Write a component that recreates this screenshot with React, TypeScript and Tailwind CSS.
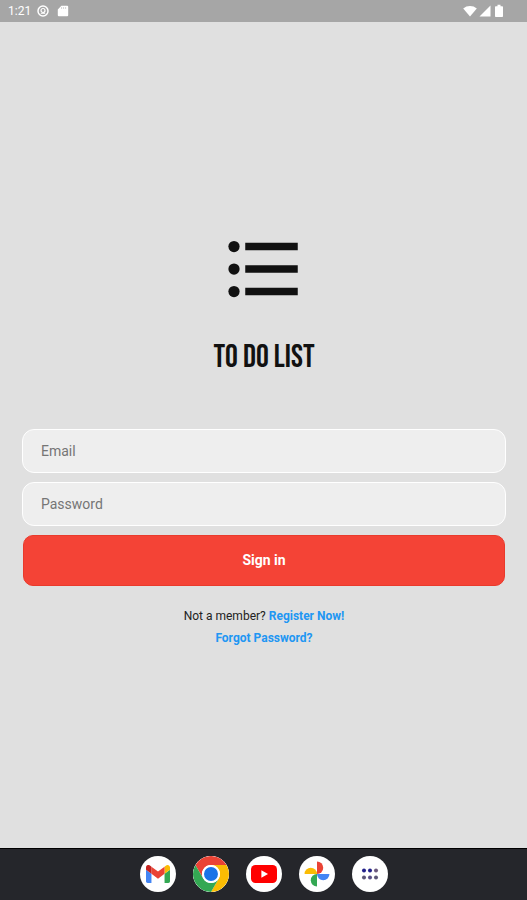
import { useState } from 'react'
import type { FormEvent, ReactNode } from 'react'

type DockApp = { name: string; icon: ReactNode }

const DOCK_APPS: DockApp[] = [
  {
    name: 'Gmail',
    icon: (
      <svg viewBox="52 42 88 66" className="h-[18px] w-6">
        <path fill="#4285f4" d="M58 108h14V74L52 59v43c0 3.32 2.69 6 6 6" />
        <path fill="#34a853" d="M120 108h14c3.32 0 6-2.69 6-6V59l-20 15" />
        <path fill="#fbbc04" d="M120 48v26l20-15v-8c0-7.42-8.47-11.65-14.4-7.2" />
        <path fill="#ea4335" d="M72 74V48l24 18 24-18v26L96 92" />
        <path fill="#c5221f" d="M52 51v8l20 15V48l-5.6-4.4c-5.94-4.45-14.4-.22-14.4 7.2" />
      </svg>
    ),
  },
  {
    name: 'Chrome',
    icon: (
      <svg viewBox="0 0 48 48" className="size-9">
        <circle cx="24" cy="24" r="24" fill="#fff" />
        <path fill="#ea4335" d="M3.2 12A24 24 0 0 1 44.8 12H24a12 12 0 0 0-10.4 18z" />
        <path fill="#fbbc04" d="M44.8 12A24 24 0 0 1 24 48l10.4-18A12 12 0 0 0 24 12z" />
        <path fill="#34a853" d="M24 48A24 24 0 0 1 3.2 12l10.4 18a12 12 0 0 0 20.8 0z" />
        <circle cx="24" cy="24" r="12" fill="#fff" />
        <circle cx="24" cy="24" r="9.3" fill="#1a73e8" />
      </svg>
    ),
  },
  {
    name: 'YouTube',
    icon: (
      <svg viewBox="0 0 26 18" className="h-[18px] w-[26px]">
        <rect width="26" height="18" rx="4.5" fill="#f00" />
        <path fill="#fff" d="M10.4 5.2v7.6L17 9z" />
      </svg>
    ),
  },
  {
    name: 'Photos',
    icon: (
      <svg viewBox="0 0 24 24" className="size-[26px]">
        <path fill="#ea4335" d="M12 0.5a5.75 5.75 0 0 1 0 11.5z" />
        <path fill="#4285f4" d="M23.5 12a5.75 5.75 0 0 1-11.5 0z" />
        <path fill="#34a853" d="M12 23.5a5.75 5.75 0 0 1 0-11.5z" />
        <path fill="#fbbc04" d="M0.5 12a5.75 5.75 0 0 1 11.5 0z" />
      </svg>
    ),
  },
  {
    name: 'All apps',
    icon: (
      <svg viewBox="0 0 18 12" className="h-3 w-[18px]">
        <circle cx="3" cy="2.5" r="2" fill="#22208a" />
        <circle cx="9" cy="2.5" r="2" fill="#22208a" />
        <circle cx="15" cy="2.5" r="2" fill="#6b587c" />
        <circle cx="3" cy="9.5" r="2" fill="#5c5677" />
        <circle cx="9" cy="9.5" r="2" fill="#5a4f86" />
        <circle cx="15" cy="9.5" r="2" fill="#5c5677" />
      </svg>
    ),
  },
]

const FIELD_CLASS =
  'h-11 w-full rounded-xl border border-white bg-[#eeeeee] px-[18px] text-[14px] text-[#222222] outline-none placeholder:text-[#757575] focus:border-[#9e9e9e]'

function StatusBar() {
  return (
    <header className="flex h-[22px] items-center justify-between bg-[#a6a6a6] pr-[22px] pl-2 text-white">
      <div className="flex items-center gap-[6px]">
        <span className="text-[12px] leading-4">1:21</span>
        <svg viewBox="0 0 12 12" className="size-3">
          <circle cx="6" cy="6" r="5" fill="none" stroke="currentColor" strokeWidth="1.5" />
          <circle cx="6" cy="5.5" r="2" fill="none" stroke="currentColor" strokeWidth="1.2" />
          <path d="M3.8 8.3h4.4" stroke="currentColor" />
        </svg>
        <svg viewBox="0 0 12 12" className="ml-[2px] size-3">
          <path fill="currentColor" d="M4.4.8h5.8a1 1 0 0 1 1 1v8.4a1 1 0 0 1-1 1H1.8a1 1 0 0 1-1-1V4.4z" />
          <path d="M4.6 2.2v1.6M6.6 2.2v1.6M8.6 2.2v1.6" stroke="#a6a6a6" strokeWidth=".6" />
        </svg>
      </div>
      <div className="flex items-center gap-[2px]">
        <svg viewBox="0 0 14 12" className="h-3 w-[14px]">
          <path fill="currentColor" d="M7 11.6.2 3.4a10.6 10.6 0 0 1 13.6 0z" />
        </svg>
        <svg viewBox="0 0 12 12" className="size-3">
          <path fill="currentColor" d="M11.5.5v11H.5z" />
        </svg>
        <svg viewBox="0 0 12 14" className="h-[14px] w-3">
          <path fill="currentColor" d="M4.5.8h3v1.4h1.7a.8.8 0 0 1 .8.8v9.2a.8.8 0 0 1-.8.8H2.8a.8.8 0 0 1-.8-.8V3a.8.8 0 0 1 .8-.8h1.7z" />
        </svg>
      </div>
    </header>
  )
}

function Dock() {
  return (
    <nav
      aria-label="Dock"
      className="flex h-[52px] items-center justify-center gap-[17px] border-y border-t-black border-b-[#25262b] bg-[#25262b]"
    >
      {DOCK_APPS.map((app) => (
        <button
          key={app.name}
          type="button"
          aria-label={app.name}
          className="flex size-9 items-center justify-center overflow-hidden rounded-full bg-white"
        >
          {app.icon}
        </button>
      ))}
    </nav>
  )
}

export default function App() {
  const [email, setEmail] = useState('')
  const [password, setPassword] = useState('')

  function handleSubmit(event: FormEvent) {
    event.preventDefault()
  }

  return (
    <div className="flex min-h-screen flex-col bg-[#e0e0e0] font-[Roboto,sans-serif]">
      <StatusBar />

      <main className="flex flex-1 flex-col items-center justify-center pt-[2px] pr-[21px] pl-[22px]">
        <svg viewBox="0 0 24 24" className="size-[90px] fill-[#111111]">
          <circle cx="4" cy="6" r="1.5" />
          <circle cx="4" cy="12" r="1.5" />
          <circle cx="4" cy="18" r="1.5" />
          <path d="M7 5h14v2H7zM7 11h14v2H7zM7 17h14v2H7z" />
        </svg>

        <h1 className="mt-[22px] font-['Bebas_Neue','Liberation_Sans_Narrow',sans-serif] text-[32px] leading-[44px] font-normal text-[#111111]">
          TO DO LIST
        </h1>

        <form onSubmit={handleSubmit} className="mt-[49px] flex w-full flex-col gap-[9px]">
          <input
            type="email"
            aria-label="Email"
            placeholder="Email"
            value={email}
            onChange={(event) => setEmail(event.target.value)}
            className={FIELD_CLASS}
          />
          <input
            type="password"
            aria-label="Password"
            placeholder="Password"
            value={password}
            onChange={(event) => setPassword(event.target.value)}
            className={FIELD_CLASS}
          />
          <button
            type="submit"
            className="mx-px h-[51px] rounded-[10px] border border-[#e93a2c] bg-[#f44336] text-[14px] font-bold text-white"
          >
            Sign in
          </button>
        </form>

        <div className="mt-[19px] text-center text-[12px] leading-[22px] text-[#222222]">
          <p>
            Not a member?{' '}
            <a href="#register" className="font-bold text-[#2196f3]">
              Register Now!
            </a>
          </p>
          <a href="#forgot" className="block font-bold text-[#2196f3]">
            Forgot Password?
          </a>
        </div>
      </main>

      <Dock />
    </div>
  )
}
